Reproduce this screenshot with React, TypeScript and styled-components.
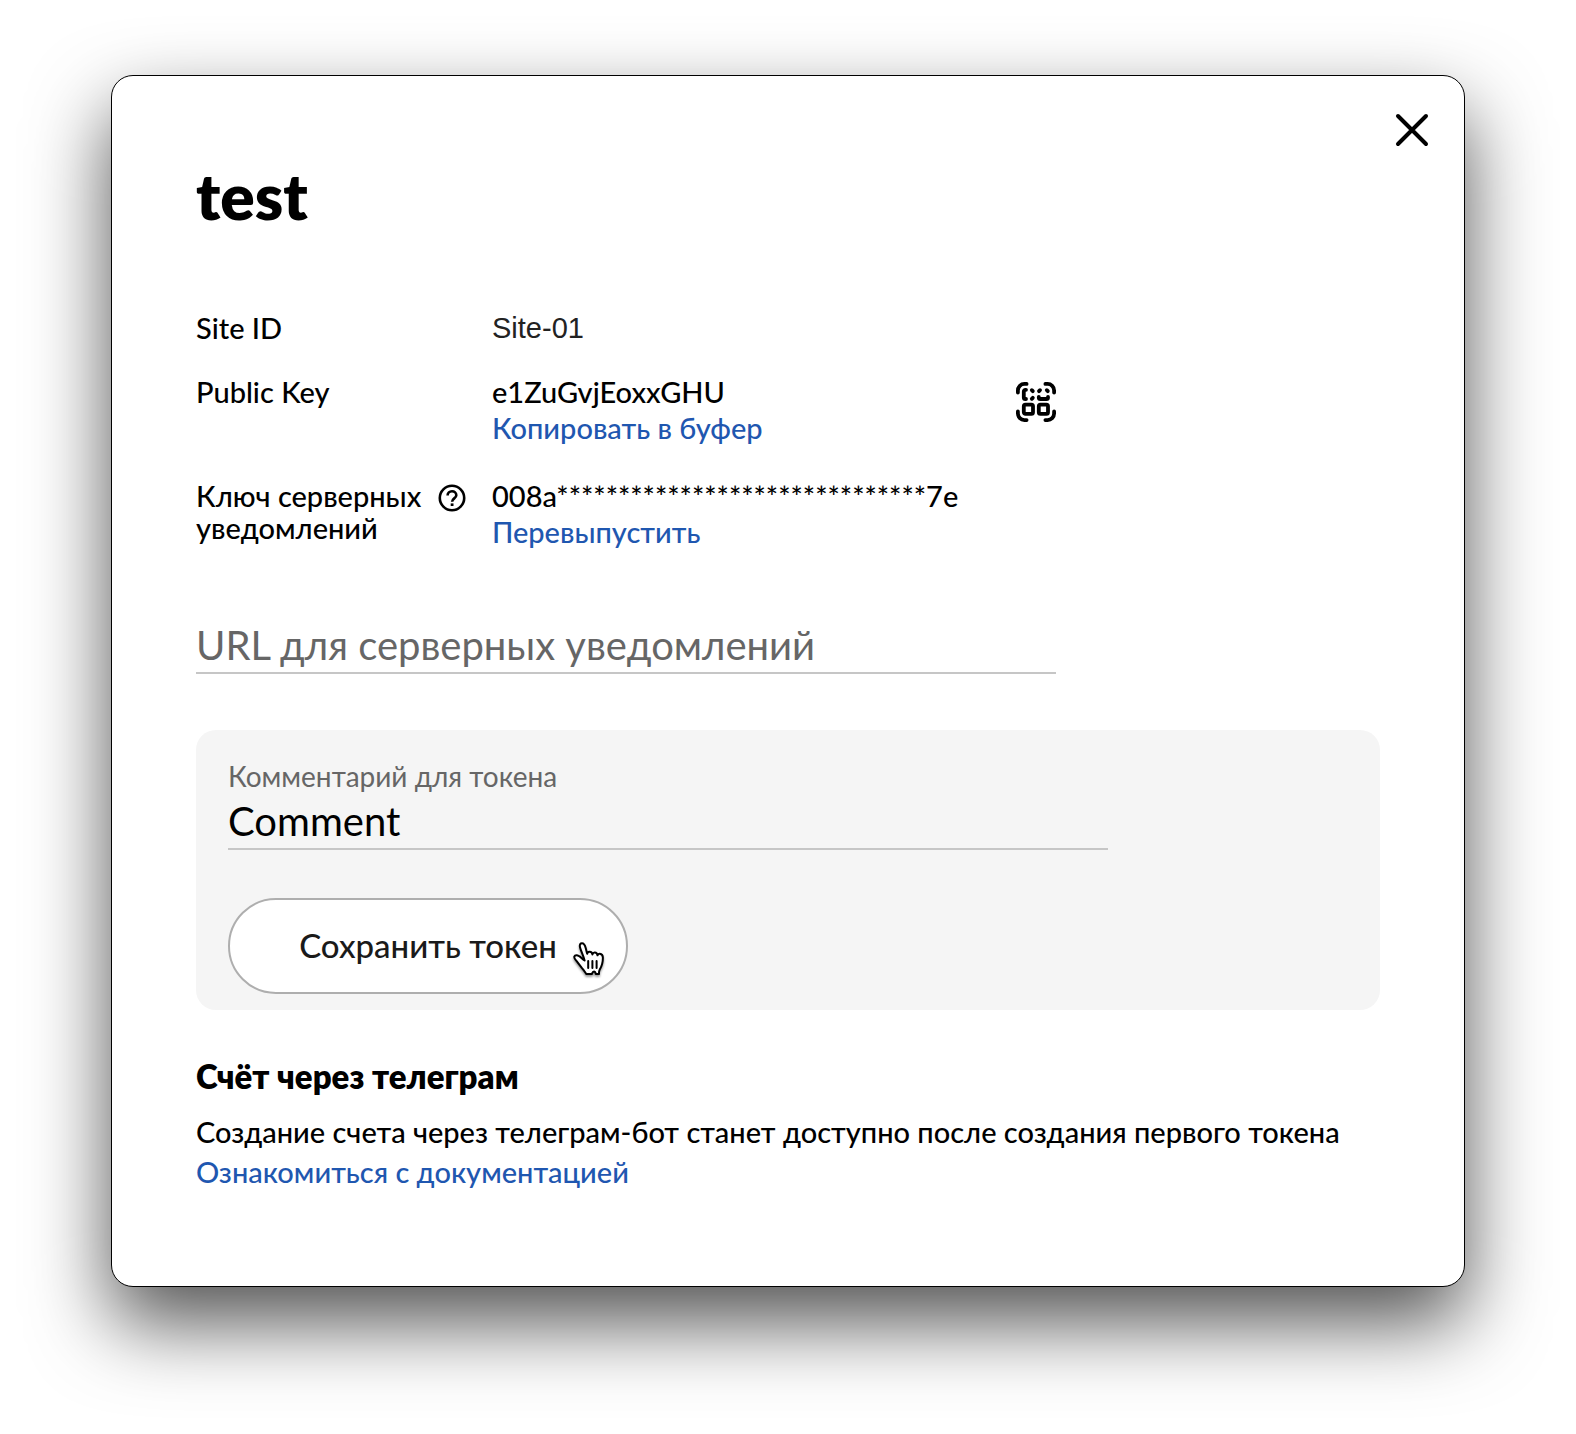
import React, { useState } from "react";
import styled, { createGlobalStyle } from "styled-components";

const GlobalStyle = createGlobalStyle`
  *, *::before, *::after { box-sizing: border-box; }
  body {
    margin: 0;
    background: #fff;
    color: #000;
    font-family: Lato, "Open Sans", sans-serif;
    font-size: 29px;
    font-weight: 500;
    line-height: 32px;
  }
`;

const Page = styled.div`
  padding: 75px 111px 147px;
  overflow: hidden;
`;

const Dialog = styled.main`
  position: relative;
  padding: 84px 84px 94px;
  background: #fff;
  border: 1px solid #000;
  border-radius: 22px;
  box-shadow: 0 36px 80px rgba(0, 0, 0, 0.68);
`;

const CloseButton = styled.button`
  position: absolute;
  top: 33px;
  right: 31px;
  display: flex;
  padding: 4px;
  border: 0;
  background: none;
  cursor: pointer;
`;

const Title = styled.h1`
  margin: 0 0 80px;
  font-size: 64px;
  font-weight: 800;
  line-height: 72px;
`;

const Details = styled.dl`
  display: grid;
  gap: 32px;
  max-width: 860px;
  margin: 0 0 64px;
`;

const Row = styled.div`
  display: grid;
  grid-template-columns: 296px 1fr auto;
  align-items: start;
`;

const Term = styled.dt`
  display: flex;
  justify-content: space-between;
  align-items: flex-start;
  gap: 16px;
  padding-right: 26px;
`;

const Value = styled.dd<{ $system?: boolean }>`
  margin: 0;
  display: grid;
  justify-items: start;
  ${(p) =>
    p.$system &&
    `font-family: "Liberation Sans", Arial, sans-serif;
     font-weight: 400;
     color: #222;`}
`;

const Action = styled.a`
  color: #1f57b0;
  line-height: 40px;
  text-decoration: none;
`;

const IconButton = styled.button`
  display: flex;
  flex: none;
  padding: 0;
  border: 0;
  background: none;
  color: inherit;
  cursor: pointer;
`;

const HelpButton = styled(IconButton)`
  margin-top: 4px;
`;

const QrCell = styled.dd`
  margin: 6px 0 0;
`;

const Field = styled.input<{ $width: number }>`
  display: block;
  width: 100%;
  max-width: ${(p) => p.$width}px;
  height: 58px;
  padding: 2px 0 0;
  border: 0;
  border-bottom: 2px solid #c6c6c6;
  border-radius: 0;
  outline: 0;
  background: transparent;
  color: #000;
  font-family: inherit;
  font-size: 40px;
  font-weight: 400;
  &::placeholder { color: #666; opacity: 1; }
`;

const TokenPanel = styled.form`
  margin: 56px 0 46px;
  padding: 30px 32px 16px;
  border-radius: 20px;
  background: #f5f5f5;
`;

const FieldLabel = styled.label`
  display: block;
  color: #666;
  font-size: 28px;
  font-weight: 400;
`;

const SaveButton = styled.button`
  position: relative;
  display: block;
  width: 400px;
  max-width: 100%;
  height: 96px;
  margin-top: 48px;
  padding: 0 24px 2px;
  border: 2px solid #aeaeae;
  border-radius: 48px;
  background: #fff;
  color: #1a1a1a;
  font: inherit;
  font-size: 33px;
  cursor: pointer;
`;

const Pointer = styled.svg`
  position: absolute;
  right: 20px;
  top: 41px;
  filter: drop-shadow(0 2px 1px rgba(0, 0, 0, 0.4));
`;

const Heading = styled.h2`
  margin: 0 0 16px;
  font-size: 33px;
  font-weight: 800;
  line-height: 40px;
`;

const Note = styled.p`
  margin: 0;
  line-height: 40px;
`;

const CloseIcon = () => (
  <svg width="34" height="34" viewBox="0 0 34 34" fill="none" stroke="#000" strokeWidth="4" strokeLinecap="round">
    <path d="M3 3l28 28M31 3L3 31" />
  </svg>
);

const HelpIcon = () => (
  <svg width="28" height="28" viewBox="0 0 28 28" fill="none" stroke="currentColor" strokeWidth="2.6">
    <circle cx="14" cy="14" r="12.2" />
    <path d="M9.6 11.6c0-2.5 1.9-4.3 4.4-4.3s4.3 1.6 4.3 3.9c0 3.1-4.2 3.3-4.2 6.6" />
    <path d="M12.7 20.7h2.8" />
  </svg>
);

const QrIcon = () => (
  <svg width="40" height="40" viewBox="0 0 40 40" fill="none" stroke="currentColor" strokeWidth="3.8" strokeLinecap="round" strokeLinejoin="round">
    <path d="M1.9 10.6V8.4a6.5 6.5 0 0 1 6.5-6.5h2.2M29.4 1.9h2.200a6.500 6.500 0 0 1 6.500 6.500v2.200M38.100 29.400v2.200a6.500 6.500 0 0 1-6.500 6.500h-2.200M10.600 38.100H8.400a6.500 6.500 0 0 1-6.500-6.500v-2.200" />
    <rect x="7.8" y="22.6" width="9.2" height="9.2" rx="1.6" />
    <rect x="22.8" y="22.6" width="9.2" height="9.2" rx="1.6" />
    <path d="M10 7.8H9.4a1.6 1.6 0 0 0-1.600 1.600v6a1.600 1.600 0 0 0 1.600 1.600h.6M15.8 8.2l1 1M15.8 16.8l1-1" />
    <path d="M22.800 15v.4a1.600 1.600 0 0 0 1.600 1.600h6a1.600 1.600 0 0 0 1.600-1.600V15M23 9.2l1-1M30.8 8.2l1 1" />
  </svg>
);

const PointerIcon = () => (
  <Pointer aria-hidden="true" width="34" height="36" viewBox="0 0 34 36" fill="#fff" stroke="#000" strokeWidth="2" strokeLinejoin="round" strokeLinecap="round">
    <path d="M12.6 19.5C11.5 15 8.700 9.500 8 6.200C7.400 3.400 8.300 2.200 10 2.200C12.200 2.200 13 4.200 13.700 7C14.300 9.200 14.600 11 15.200 12.800C15.400 11.300 16.300 10.600 17.700 10.700C19.300 10.800 20.200 11.700 20.400 13.400C20.800 12 21.600 11.500 22.900 11.600C24.500 11.700 25.200 12.600 25.500 14.300C26 13.100 26.700 12.600 27.900 12.700C30 12.900 30.900 14.300 30.900 16.800C30.900 23 29.500 25.800 27.700 28.600C27 30 26.900 31.500 27 33L23.800 33C23.500 31.700 22.800 30.600 22 30.600C21.200 30.600 20.300 31.800 19.800 33L14.200 33C13 31.200 12 29.300 10.200 27.300C8.400 25 7 23.200 5.200 20.800C3.300 18.400 1.800 17.300 2.300 15.700C3 13.700 5.200 13.800 7.200 15.200C9 16.400 10.700 18.300 12.600 19.500Z" />
    <path d="M16.200 20v7M20.400 20v7M24.600 20v7" fill="none" />
  </Pointer>
);

export default function App() {
  const [url, setUrl] = useState("");
  const [comment, setComment] = useState("Comment");

  return (
    <>
      <GlobalStyle />
      <Page>
        <Dialog role="dialog" aria-labelledby="title">
          <CloseButton type="button" aria-label="Закрыть">
            <CloseIcon />
          </CloseButton>
          <Title id="title">test</Title>

          <Details>
            <Row>
              <Term>Site ID</Term>
              <Value $system>Site-01</Value>
            </Row>
            <Row>
              <Term>Public Key</Term>
              <Value>
                e1ZuGvjEoxxGHU
                <Action href="#copy">Копировать в буфер</Action>
              </Value>
              <QrCell>
                <IconButton type="button" aria-label="QR">
                  <QrIcon />
                </IconButton>
              </QrCell>
            </Row>
            <Row>
              <Term>
                Ключ серверных уведомлений
                <HelpButton type="button" aria-label="Справка">
                  <HelpIcon />
                </HelpButton>
              </Term>
              <Value>
                008a******************************7e
                <Action href="#reissue">Перевыпустить</Action>
              </Value>
            </Row>
          </Details>

          <Field
            $width={860}
            aria-label="URL для серверных уведомлений"
            placeholder="URL для серверных уведомлений"
            value={url}
            onChange={(e) => setUrl(e.target.value)}
          />

          <TokenPanel onSubmit={(e) => e.preventDefault()}>
            <FieldLabel htmlFor="comment">Комментарий для токена</FieldLabel>
            <Field $width={880} id="comment" value={comment} onChange={(e) => setComment(e.target.value)} />
            <SaveButton type="submit">
              Сохранить токен
              <PointerIcon />
            </SaveButton>
          </TokenPanel>

          <Heading>Счёт через телеграм</Heading>
          <Note>Создание счета через телеграм-бот станет доступно после создания первого токена</Note>
          <Note>
            <Action href="#docs">Ознакомиться с документацией</Action>
          </Note>
        </Dialog>
      </Page>
    </>
  );
}
